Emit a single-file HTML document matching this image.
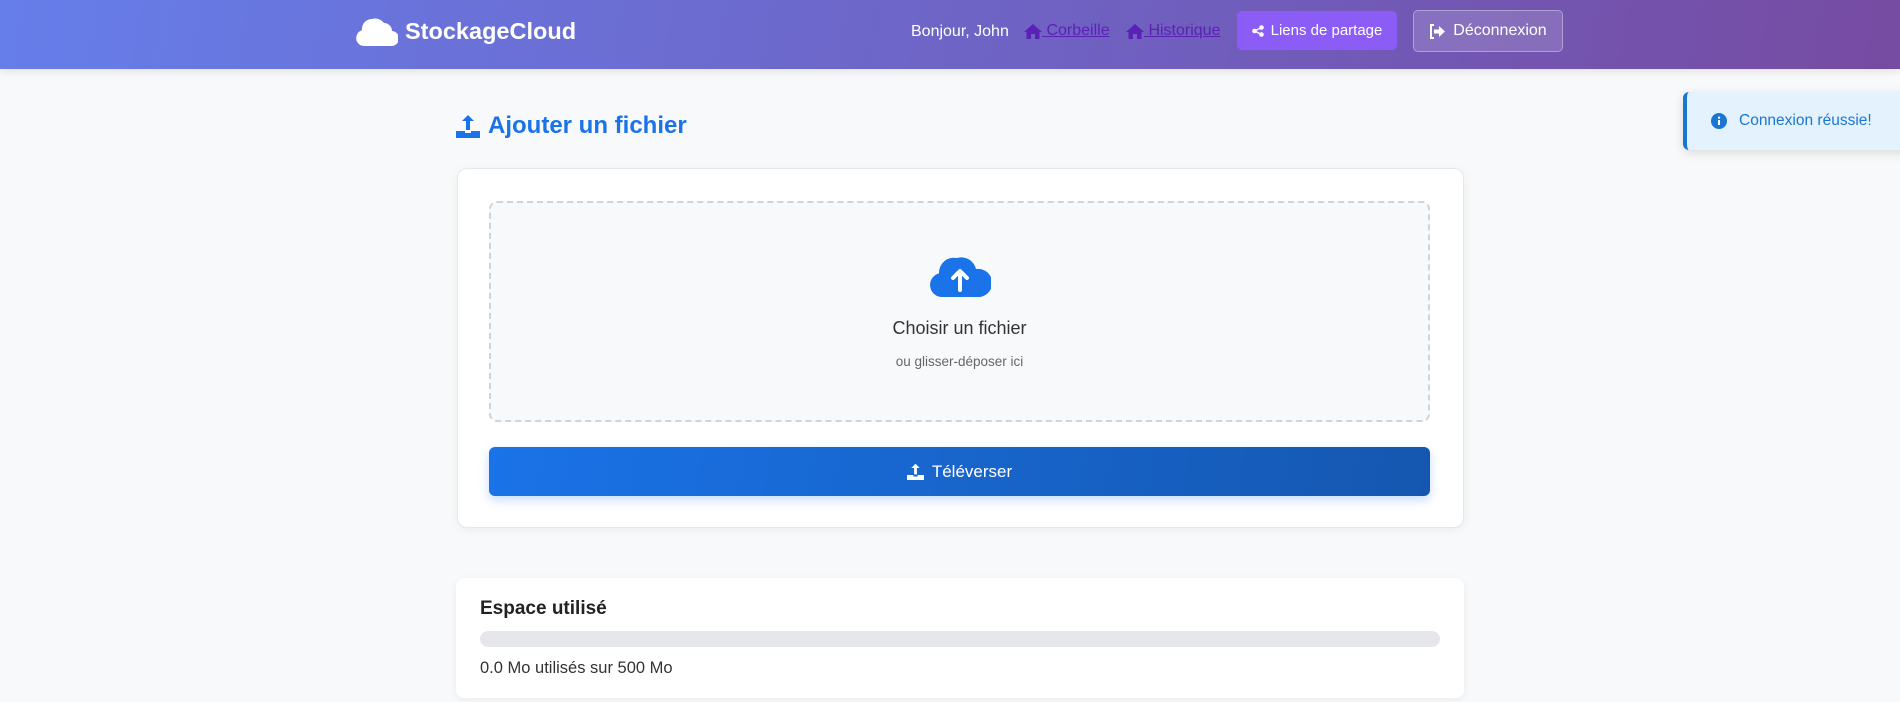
<!DOCTYPE html>
<html><head><meta charset="utf-8"><style>
*{box-sizing:border-box;margin:0;padding:0}
body{width:1900px;height:702px;overflow:hidden;background:#f8f9fa;font-family:"Liberation Sans",Arial,sans-serif;position:relative}
.hdr{position:absolute;left:0;top:0;width:1900px;height:69px;background:linear-gradient(100deg,#667eea,#764ba2);box-shadow:0 2px 8px rgba(0,0,0,.1)}
.abs{position:absolute}
.logo{left:356px;top:16px;color:#fff;font-weight:bold;font-size:23.5px;display:flex;align-items:center;gap:7px}
.nav{top:23px;font-size:16px;color:#fff}
.lnk{color:#5b21b6;text-decoration:underline;font-size:16px;top:22px;display:flex;align-items:center}
.btn1{left:1237px;top:11px;width:160px;height:39px;background:#8b5cf6;border-radius:5px;color:#fff;font-size:15px;display:flex;align-items:center;justify-content:center;gap:7px}
.btn2{left:1413px;top:10px;width:150px;height:42px;background:rgba(255,255,255,.15);border:1px solid rgba(255,255,255,.35);border-radius:5px;color:#fff;font-size:16px;display:flex;align-items:center;justify-content:center;gap:8px}
.toast{left:1683px;top:92px;width:230px;height:58px;background:#e3f2fd;border-left:4px solid #1976d2;border-radius:6px;box-shadow:0 3px 10px rgba(0,0,0,.12);color:#1976d2;font-size:15.5px;display:flex;align-items:center;padding-left:24px;gap:12px}
.title{left:456px;top:112px;color:#1a73e8;font-weight:bold;font-size:24px;display:flex;align-items:center;gap:8px}
.card{left:457px;top:168px;width:1007px;height:360px;background:#fff;border-radius:10px;border:1px solid #e5e7eb;box-shadow:0 2px 10px rgba(0,0,0,.05)}
.drop{left:489px;top:201px;width:941px;height:221px;background:#f8f9fa;border:2px dashed #cbd5e1;border-radius:8px;text-align:center}
.up{left:489px;top:447px;width:941px;height:49px;border-radius:6px;background:linear-gradient(100deg,#1a73e8,#1557b0);box-shadow:0 4px 10px rgba(26,115,232,.25);color:#fff;font-size:17px;display:flex;align-items:center;justify-content:center;gap:8px}
.card2{left:456px;top:578px;width:1008px;height:120px;background:#fff;border-radius:8px;box-shadow:0 2px 8px rgba(0,0,0,.06)}
</style></head><body>
<div class="hdr"></div>
<div class="abs logo"><svg width="42" height="30" viewBox="0 0 42 30"><path d="M8 30a8 8 0 0 1-2-15.7A10 10 0 0 1 16 3a11 11 0 0 1 12 4 8 8 0 0 1 8 8 7.5 7.5 0 0 1-1 15z" fill="#fff"/></svg>StockageCloud</div>
<div class="abs nav" style="left:911px">Bonjour, John</div>
<div class="abs lnk" style="left:1024px"><svg width="18" height="15" viewBox="0 0 18 15"><path d="M9 0L0 8h2.5v7h4.5v-5h4v5h4.5V8H18z" fill="#5b21b6"/></svg>&nbsp;Corbeille</div>
<div class="abs lnk" style="left:1126px"><svg width="18" height="15" viewBox="0 0 18 15"><path d="M9 0L0 8h2.5v7h4.5v-5h4v5h4.5V8H18z" fill="#5b21b6"/></svg>&nbsp;Historique</div>
<div class="abs btn1"><svg width="12" height="12" viewBox="0 0 12 12"><circle cx="9.5" cy="2.5" r="2.3" fill="#fff"/><circle cx="2.5" cy="6" r="2.3" fill="#fff"/><circle cx="9.5" cy="9.5" r="2.3" fill="#fff"/><path d="M2.5 6L9.5 2.5M2.5 6l7 3.5" stroke="#fff" stroke-width="1.3"/></svg>Liens de partage</div>
<div class="abs btn2"><svg width="16" height="15" viewBox="0 0 16 15"><path d="M5 1H2v13h3" stroke="#fff" stroke-width="2" fill="none"/><path d="M5 5.5h5V2l6 5.5-6 5.5V9.5H5z" fill="#fff"/></svg>Déconnexion</div>
<div class="abs toast"><svg width="16" height="16" viewBox="0 0 16 16"><circle cx="8" cy="8" r="8" fill="#1976d2"/><rect x="7" y="7" width="2" height="5" fill="#fff"/><circle cx="8" cy="4.7" r="1.2" fill="#fff"/></svg>Connexion réussie!</div>
<div class="abs title"><svg width="24" height="24" viewBox="0 0 24 24"><path d="M12 1l-6 6h4v9h4V7h4z" fill="#1a73e8"/><path d="M0 17h9v2h6v-2h9v7H0z" fill="#1a73e8"/></svg>Ajouter un fichier</div>
<div class="abs card"></div>
<div class="abs drop">
<svg style="margin-top:52px" width="62" height="42" viewBox="0 0 62 42"><path d="M13 42a12 12 0 0 1-3-23.6A15 15 0 0 1 28 3a15 15 0 0 1 19 11 11 11 0 0 1 4 28z" fill="#1a73e8"/><path d="M31 35V17M24 23l7-7 7 7" stroke="#fff" stroke-width="4" fill="none" stroke-linecap="round" stroke-linejoin="round"/></svg>
<div style="font-size:18px;color:#333;margin-top:16px">Choisir un fichier</div>
<div style="font-size:13.5px;color:#666;margin-top:15px">ou glisser-déposer ici</div>
</div>
<div class="abs up"><svg width="17" height="17" viewBox="0 0 24 24"><path d="M12 1l-6 6h4v9h4V7h4z" fill="#fff"/><path d="M0 17h9v2h6v-2h9v7H0z" fill="#fff"/></svg>Téléverser</div>
<div class="abs card2">
<div class="abs" style="left:24px;top:20px;font-weight:bold;font-size:19px;color:#222">Espace utilisé</div>
<div class="abs" style="left:24px;top:53px;width:960px;height:16px;border-radius:8px;background:#e5e7eb"></div>
<div class="abs" style="left:24px;top:81px;font-size:16.5px;color:#333">0.0 Mo utilisés sur 500 Mo</div>
</div>
</body></html>
